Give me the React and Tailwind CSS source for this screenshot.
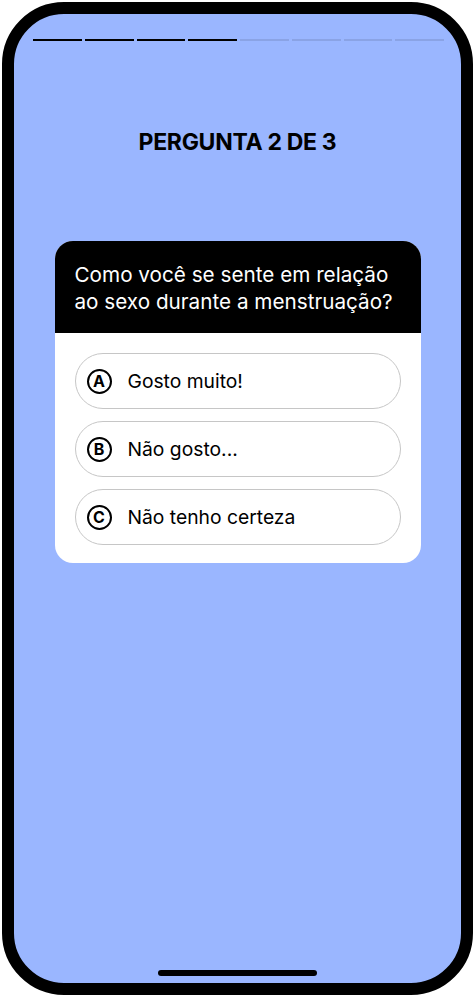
import React from "react";

const options = [
  { letter: "A", label: "Gosto muito!" },
  { letter: "B", label: "Não gosto..." },
  { letter: "C", label: "Não tenho certeza" },
];

const App = () => {
  const steps = [1, 1, 1, 1, 0, 0, 0, 0];

  return (
    <div
      className="w-[475px] h-[998px] bg-white pt-[2px] pl-[2px]"
      style={{ fontFamily: "Inter, 'Noto Sans', sans-serif" }}
    >
      <div className="w-[471px] h-[993px] border-[12px] border-black rounded-[62px] bg-[#9ab6ff] flex flex-col overflow-hidden">
        <div className="flex gap-[3px] pl-[19px] pr-[17px] pt-[25px]">
          {steps.map((on, i) => (
            <div
              key={i}
              className={on ? "flex-1 h-[2px] bg-black" : "flex-1 h-[2px] bg-black/10"}
            />
          ))}
        </div>

        <h1 className="mt-[86px] text-center text-[23px] leading-[30px] font-bold text-black tracking-[-0.3px]">
          PERGUNTA 2 DE 3
        </h1>

        <div className="mt-[84px] mx-auto w-[366px] rounded-[18px] bg-white overflow-hidden">
          <div className="bg-black text-white px-5 pt-[20px] pb-[18px] text-[20.7px] leading-[27px]">
            Como você se sente em relação ao sexo durante a menstruação?
          </div>
          <div className="flex flex-col gap-[12px] px-5 pt-5 pb-[18px]">
            {options.map((o) => (
              <button
                key={o.letter}
                className="h-[56px] w-full rounded-full border border-[#c6c6c6] flex items-center pl-[11px] gap-[16px] text-left"
              >
                <span className="w-[25px] h-[25px] rounded-full border-2 border-black flex items-center justify-center text-[16px] font-bold leading-none">
                  {o.letter}
                </span>
                <span className="text-[19.3px] text-black">{o.label}</span>
              </button>
            ))}
          </div>
        </div>

        <div className="mt-auto mb-[7px] mx-auto w-[159px] h-[6px] rounded-full bg-black" />
      </div>
    </div>
  );
};

export default App;
